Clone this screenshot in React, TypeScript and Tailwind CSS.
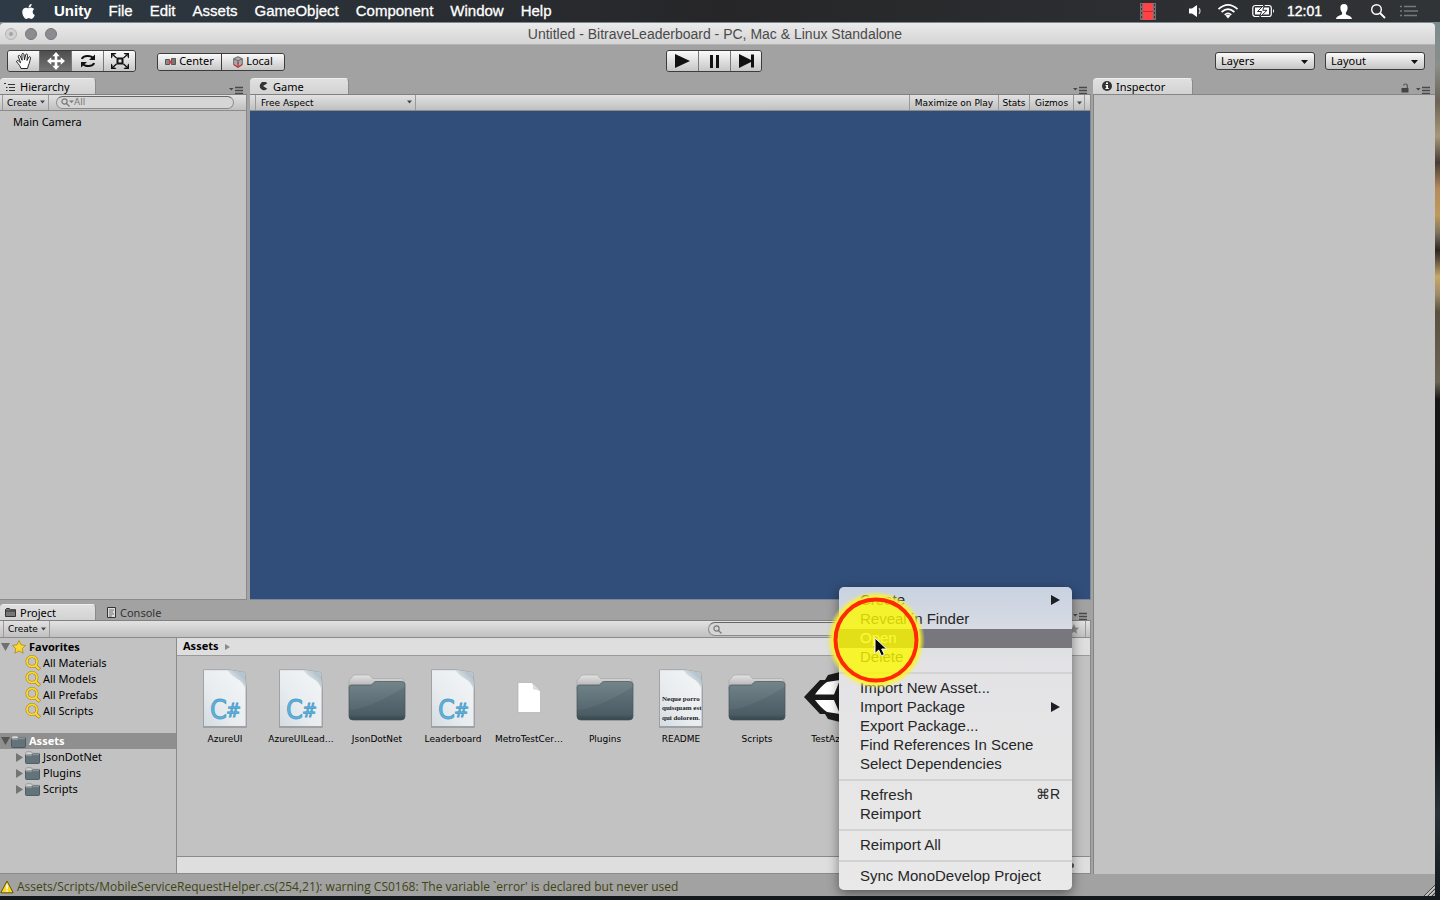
import React from "react";
import { FaApple } from "react-icons/fa";

const UI = "font-['Noto_Sans','Open_Sans',sans-serif]";
const SYSTEM = "font-['Liberation_Sans',Arial,sans-serif]";
const SMALL = "font-['DejaVu_Sans','Noto_Sans',sans-serif] text-[9px]";

/* ---------- shared pieces ---------- */

function Caret({ className = "" }: { className?: string }) {
  return (
    <svg className={className} width="5" height="4" viewBox="0 0 5 4" aria-hidden="true">
      <path d="M0 0.5h5L2.5 3.5z" fill="currentColor" />
    </svg>
  );
}

function PanelMenu({ label }: { label: string }) {
  return (
    <button aria-label={label} className="flex h-3 items-end text-[#484848]">
      <svg width="14" height="8" viewBox="0 0 14 8" aria-hidden="true">
        <path d="M0 2h4.6L2.3 4.600z" fill="currentColor" />
        <path d="M6 1.500h8M6 4.500h8M6 7.500h8" stroke="currentColor" strokeWidth="1.300" />
      </svg>
    </button>
  );
}

function Tab({ icon, children, active = false }: { icon: React.ReactNode; children: React.ReactNode; active?: boolean }) {
  const look = active
    ? "rounded-t border-r border-t border-r-[#8a8a8a] border-t-[#eeeeee] bg-linear-to-b from-[#e0e0e0] to-[#d2d2d2] text-black"
    : "border-t border-transparent text-[#333333]";
  return (
    <button role="tab" aria-selected={active} className={`flex h-4 items-center pt-px ${look}`}>
      {icon}
      <span>{children}</span>
    </button>
  );
}

const STRIP = "flex h-[17px] shrink-0 items-stretch border-y border-t-[#808080] border-b-[#8c8c8c] bg-linear-to-b from-[#e2e2e2] to-[#c0c0c0]";

/* ---------- macOS menu bar ---------- */

function MenuBar() {
  const menus = ["File", "Edit", "Assets", "GameObject", "Component", "Window", "Help"];
  return (
    <header className={`flex h-[22px] shrink-0 items-center bg-linear-to-r from-[#2e3a45] via-[#262628] to-[#303437] text-[15px] leading-[22px] text-white ${SYSTEM}`}>
      <nav className="flex items-center gap-[17px] pl-5">
        <a href="#apple" aria-label="Apple menu" className="flex w-[17px]">
          <FaApple size={17} />
        </a>
        <a href="#unity" className="font-bold">Unity</a>
        {menus.map((m) => (
          <a key={m} href={`#${m}`} className="[-webkit-text-stroke:0.3px_white]">{m}</a>
        ))}
      </nav>
      <div className="ml-auto flex items-center pr-[22px]">
        <svg width="16" height="17" viewBox="0 0 16 17" aria-hidden="true">
          <path d="M0 0h16v17H0z" fill="#707174" />
          <path d="M3 0h10v17H3z" fill="#ff4245" />
          <path d="M3 8.500h10" stroke="#c02c30" />
          <path d="M1.500 1v16M14.500 1v16" stroke="#333539" strokeDasharray="2 2" />
        </svg>
        <svg className="ml-8" width="14" height="14" viewBox="0 0 14 14" aria-hidden="true">
          <path d="M1 4.500h3L9 1v12L4 9.500H1z" fill="#fff" />
          <path d="M11 4.200q2 2.800 0 5.600" fill="none" stroke="#bbb" strokeWidth="1.300" />
        </svg>
        <svg className="ml-[15px]" width="22" height="16" viewBox="0 0 22 16" fill="none" stroke="#fff" strokeWidth="1.700" aria-hidden="true">
          <path d="M1.500 6.200Q11-2.400 20.500 6.200M4.600 9Q11 3.200 17.400 9M7.700 11.800Q11 9 14.300 11.800" />
          <path d="M8.500 12.600Q11 10.800 13.500 12.600L11 15.500z" fill="#fff" stroke="none" />
        </svg>
        <svg className="ml-[13px]" width="24" height="14" viewBox="0 0 24 14" aria-hidden="true">
          <rect x="0.800" y="1.500" width="18.500" height="11" rx="2.500" fill="none" stroke="#fff" strokeWidth="1.200" />
          <path d="M21 5q2 2 0 4z" fill="#fff" />
          <path d="M3 3.500h14v7H3z" fill="#fff" />
          <path d="M12.500 0.500L5.500 7.500H9.500L7.500 13.500L15 6.300H10.800z" fill="#fff" stroke="#2b2d30" strokeWidth="1" />
        </svg>
        <time className="ml-[11px] text-[14px] [-webkit-text-stroke:0.4px_white]">12:01</time>
        <svg className="ml-[13px]" width="18" height="15" viewBox="0 0 18 15" aria-hidden="true">
          <path d="M9 0C6.500 0 5.300 1.600 5.400 4c.1 2 .7 3.400 1.700 4.400v1.800C6.500 11.300 1.500 11.400 1 15h16c-.5-3.600-5.500-3.700-6.100-4.800V8.400c1-1 1.600-2.400 1.700-4.400C12.700 1.600 11.500 0 9 0z" fill="#fff" />
        </svg>
        <svg className="ml-[17px]" width="16" height="16" viewBox="0 0 16 16" fill="none" stroke="#fff" aria-hidden="true">
          <circle cx="6.500" cy="6.500" r="4.800" strokeWidth="1.400" />
          <path d="M10 10l5 5" strokeWidth="1.800" />
        </svg>
        <svg className="ml-[14px]" width="18" height="12" viewBox="0 0 18 12" stroke="#77797c" strokeWidth="1.500" aria-hidden="true">
          <path d="M0 1.500h2M4 1.500h12M0 6h2M4 6h14M0 10.500h2M4 10.500h13" />
        </svg>
      </div>
    </header>
  );
}

/* ---------- window chrome ---------- */

function TitleBar() {
  return (
    <div className="flex h-[22px] shrink-0 items-center rounded-t border-b border-[#b4b4b4] bg-linear-to-b from-[#ebebeb] to-[#d4d4d4]">
      <div className="flex gap-2 pl-[5px]">
        <button aria-label="Close" className="flex size-3 items-center justify-center rounded-full border border-[#b4b4b4] bg-[#d2d2d2]">
          <span className="size-1 rounded-full bg-[#a4a4a4]" />
        </button>
        <button aria-label="Minimize" className="size-3 rounded-full border border-[#77777b] bg-[#8b8b90]" />
        <button aria-label="Zoom" className="size-3 rounded-full border border-[#77777b] bg-[#8b8b90]" />
      </div>
      <h1 className={`mr-[62px] flex-1 text-center text-[14px] leading-5 text-[#4a4a4a] ${SYSTEM}`}>
        Untitled - BitraveLeaderboard - PC, Mac &amp; Linux Standalone
      </h1>
    </div>
  );
}

const FRAME = "flex overflow-hidden rounded-[3px] border border-[#3c3c3c]";
const LIGHT = "bg-linear-to-b from-[#fafafa] to-[#c6c6c6]";

function Toolbar() {
  return (
    <div className="grid h-[33px] shrink-0 grid-cols-[1fr_auto_1fr] items-center bg-[#a2a2a2] pb-px pl-[7px] pr-[10px] text-[11px]">
      <div className="flex items-center gap-[21px]">
        <div className={`${FRAME} h-[22px] divide-x divide-[#777777]`}>
          <button aria-label="Hand tool" className={`flex w-8 items-center justify-center ${LIGHT}`}>
            <svg width="18" height="18" viewBox="0 0 18 18" fill="#fff" stroke="#222" strokeWidth="1" strokeLinejoin="round" aria-hidden="true">
              <path d="M6 16.500C5.500 14.500 4 12.500 1.600 9.800 1.200 8.600 2.600 8 3.600 9l2 1.800L3.300 4.600C3 3.200 4.600 2.700 5.200 4l1.900 4.300L6.900 2.500C6.900 1 8.700 1 8.900 2.400l.6 5.500 1.100-5c.4-1.400 2-1.100 1.900.4l-.5 5.200 1.700-3.200c.7-1.200 2.200-.5 1.800.8-.8 3-1 5-2 7l-1 3.400z" />
            </svg>
          </button>
          <button aria-label="Move tool" aria-pressed="true" className="flex w-8 items-center justify-center bg-linear-to-b from-[#4e4e4e] to-[#747474]">
            <svg width="18" height="18" viewBox="0 0 18 18" fill="#fff" aria-hidden="true">
              <path d="M9 0l3.700 4.300H10.300V7.700H13.700V5.300L18 9l-4.300 3.700V10.300H10.300V13.700H12.700L9 18 5.300 13.700H7.700V10.300H4.300V12.700L0 9l4.300-3.700V7.700H7.700V4.300H5.300z" />
            </svg>
          </button>
          <button aria-label="Rotate tool" className={`flex w-8 items-center justify-center ${LIGHT}`}>
            <svg width="16" height="14" viewBox="0 0 16 14" fill="none" stroke="#111" strokeWidth="2.200" aria-hidden="true">
              <path d="M2 5Q3 2 7.500 2T12.500 4M14 9Q13 12 8.500 12T3.500 10" />
              <path d="M15 .5V6H9zM1 13.500V8h6z" fill="#111" stroke="none" />
            </svg>
          </button>
          <button aria-label="Scale tool" className={`flex w-[31px] items-center justify-center ${LIGHT}`}>
            <svg width="18" height="16" viewBox="0 0 18 16" fill="none" stroke="#111" aria-hidden="true">
              <rect x="6.500" y="5.500" width="5" height="5" strokeWidth="2" />
              <path d="M1 1l4.500 4M17 1l-4.500 4M1 15l4.500-4M17 15l-4.500-4" strokeWidth="1.300" />
              <path d="M0 0h5.500L4 1.500H1.500V4L0 5.500zM18 0h-5.500L14 1.500h2.500V4L18 5.500zM0 16h5.500L4 14.500H1.500V12L0 10.500zM18 16h-5.500l1.500-1.500h2.500V12l1.500-1.500z" fill="#111" stroke="none" />
            </svg>
          </button>
        </div>
        <div className={`${FRAME} mt-px h-[18px] divide-x divide-[#3c3c3c]`}>
          <button className={`flex w-16 items-center justify-center gap-[3px] ${LIGHT}`}>
            <svg width="11" height="8" viewBox="0 0 11 8" aria-hidden="true">
              <path d="M.5 1.500h4v5h-4z" fill="#8a8a8a" stroke="#555" />
              <path d="M6.500.5h4v6h-4z" fill="#777" stroke="#555" />
              <path d="M4 2.500h3v3H4z" fill="#d8343c" />
            </svg>
            Center
          </button>
          <button className={`flex w-[62px] items-center justify-center gap-[3px] ${LIGHT}`}>
            <svg width="10" height="12" viewBox="0 0 10 12" strokeLinejoin="round" aria-hidden="true">
              <path d="M5 .7l4.300 2v5.800L5 11.200.7 8.500V2.700z" fill="#aaa" stroke="#666" />
              <path d="M.7 2.700L5 5l4.300-2.300M5 5v3" fill="none" stroke="#666" />
              <path d="M.7 8.500L5 11.200l4.300-2.700M5 10V6" fill="none" stroke="#c8393e" strokeWidth="1.300" />
            </svg>
            Local
          </button>
        </div>
      </div>
      <div className={`${FRAME} mr-1 h-[22px] divide-x divide-[#777777]`}>
        <button aria-label="Play" className={`flex w-8 items-center justify-center ${LIGHT}`}>
          <svg width="15" height="14" viewBox="0 0 15 14" aria-hidden="true"><path d="M0 0l15 7-15 7z" fill="#111" /></svg>
        </button>
        <button aria-label="Pause" className={`flex w-8 items-center justify-center ${LIGHT}`}>
          <svg width="9" height="13" viewBox="0 0 9 13" aria-hidden="true"><path d="M0 0h3v13H0zM6 0h3v13H6z" fill="#111" /></svg>
        </button>
        <button aria-label="Step" className={`flex w-[30px] items-center justify-center ${LIGHT}`}>
          <svg width="15" height="14" viewBox="0 0 15 14" aria-hidden="true"><path d="M0 0l12 6V.5h3v13h-3V8L0 14z" fill="#111" /></svg>
        </button>
      </div>
      <div className="flex justify-end gap-[10px]">
        {["Layers", "Layout"].map((name) => (
          <div key={name} className={`relative h-[18px] w-[100px] ${FRAME} ${LIGHT}`}>
            <select aria-label={name} className="w-full appearance-none bg-transparent pl-[5px] text-[11px] leading-4">
              <option>{name}</option>
            </select>
            <svg className="pointer-events-none absolute right-[6px] top-[7px]" width="7" height="4" viewBox="0 0 7 4" aria-hidden="true">
              <path d="M0 0h7L3.500 4z" fill="#111" />
            </svg>
          </div>
        ))}
      </div>
    </div>
  );
}

/* ---------- panels ---------- */

function CreateButton() {
  return (
    <button className={`flex w-[45px] items-center pl-[4px] pt-[2px] ${SMALL}`}>
      Create <Caret className="mb-[3px] ml-[3px] text-[#444]" />
    </button>
  );
}

function SearchIcon({ menu = false }: { menu?: boolean }) {
  return (
    <svg className="shrink-0" width="13" height="9" viewBox="0 0 13 9" fill="none" stroke="#777" aria-hidden="true">
      <circle cx="3.500" cy="3.500" r="2.600" strokeWidth="1.200" />
      <path d="M5.500 5.500l3 3" strokeWidth="1.300" />
      {menu && <path d="M8 2.500h5L10.500 5z" fill="#777" stroke="none" />}
    </svg>
  );
}

const SEARCH_BOX = "my-px flex items-center rounded-full border border-[#8a8a8a] border-t-[#666] bg-[#d6d6d6] pl-1";

function Hierarchy() {
  return (
    <section aria-label="Hierarchy" className="flex w-[247px] shrink-0 flex-col">
      <div className="flex h-4 items-end">
        <div className="w-[96px] [&>button]:w-full">
          <Tab active icon={
            <svg className="ml-1 mr-[5px] shrink-0" width="11" height="9" viewBox="0 0 11 9" stroke="#333" aria-hidden="true">
              <path d="M0 .5h2M4 1.500h7M2 4.500h1.500M5 4.500h6M2 7.500h1.500M5 7.500h6" />
            </svg>
          }>Hierarchy</Tab>
        </div>
        <div className="ml-auto pr-1"><PanelMenu label="Hierarchy menu" /></div>
      </div>
      <div className={`${STRIP} border-r border-r-[#8a8a8a]`}>
        <div className="ml-[2px] flex border-x border-[#9a9a9a]"><CreateButton /></div>
        <label className={`${SEARCH_BOX} ml-[7px] w-[178px]`}>
          <SearchIcon menu />
          <input aria-label="Search hierarchy" placeholder="All" className={`w-full bg-transparent outline-none placeholder:text-[#777] ${SMALL}`} />
        </label>
      </div>
      <div className="flex-1 border-b border-r border-[#8a8a8a] bg-[#c2c2c2] pt-[3px]">
        <button className="h-4 pl-[13px] leading-4">Main Camera</button>
      </div>
    </section>
  );
}

function GameView() {
  return (
    <main className="flex min-w-0 flex-1 flex-col">
      <div className="flex h-4 items-end">
        <div className="w-[99px] [&>button]:w-full">
          <Tab active icon={
            <svg className="mb-[2px] ml-[9px] mr-[5px] shrink-0" width="9" height="9" viewBox="0 0 9 9" aria-hidden="true">
              <path d="M8.300 1.200A4.300 4.300 0 1 0 8.300 6.800L4 4z" fill="#333" />
            </svg>
          }>Game</Tab>
        </div>
        <div className="ml-auto pr-1"><PanelMenu label="Game menu" /></div>
      </div>
      <div className={`${STRIP} border-r border-r-[#8a8a8a] ${SMALL}`}>
        <div className="relative ml-[5px] flex w-[161px] border-x border-[#999]">
          <select aria-label="Aspect ratio" className="w-full appearance-none bg-transparent pl-[5px] pt-[2px]">
            <option>Free Aspect</option>
          </select>
          <Caret className="pointer-events-none absolute right-[3px] top-[5px] text-[#444]" />
        </div>
        <div className="ml-auto mr-[5px] flex divide-x divide-[#999] border-x border-[#999]">
          <button className="w-[89px] pt-[2px]">Maximize on Play</button>
          <button className="w-[31px] pt-[2px]">Stats</button>
          <button className="w-[44px] pt-[2px]">Gizmos</button>
          <button aria-label="Gizmo options" className="flex w-[10px] items-center justify-center text-[#444]"><Caret /></button>
        </div>
      </div>
      <div className="flex-1 border-b border-r border-[#7d8797] bg-[#314d79]" />
    </main>
  );
}

function Inspector() {
  return (
    <aside aria-label="Inspector" className="flex w-[342px] shrink-0 flex-col">
      <div className="flex h-4 items-end">
        <div className="w-[100px] [&>button]:w-full">
          <Tab active icon={
            <svg className="mb-[2px] ml-[9px] mr-1 shrink-0" width="10" height="10" viewBox="0 0 10 10" aria-hidden="true">
              <circle cx="5" cy="5" r="5" fill="#333" />
              <path d="M4 1.500h2v1.500H4zM3.500 4H6v3h.8v1H3.400V7h.8V5h-.7z" fill="#fff" />
            </svg>
          }>Inspector</Tab>
        </div>
        <div className="ml-auto flex items-end gap-[7px] pr-[5px]">
          <button aria-label="Lock inspector" className="mb-px">
            <svg width="8" height="10" viewBox="0 0 8 10" aria-hidden="true">
              <path d="M.5 5h7v4.500h-7z" fill="#444" />
              <path d="M6.300 5V2.500Q6.200 1 4.500 1T2.500 2.500" fill="none" stroke="#555" strokeWidth="1.200" />
            </svg>
          </button>
          <PanelMenu label="Inspector menu" />
        </div>
      </div>
      <div className="flex-1 border-l border-t border-[#858585] bg-[#c2c2c2]" />
    </aside>
  );
}

/* ---------- project browser ---------- */

function FolderSmall() {
  return (
    <svg width="15" height="13" viewBox="0 0 15 13" aria-hidden="true">
      <path d="M.5 2.500L1.500.8h4.800l1 1.500h7.200v3H.5z" fill="#d5d5d5" stroke="#777" strokeWidth=".6" />
      <path d="M.5 4h6l1-1h7v8.600q0 .9-.9.900H1.400q-.9 0-.9-.9z" fill="#63737a" stroke="#445157" strokeWidth=".8" />
      <path d="M1 4.600h5.800l1-1H14" stroke="#9aa8ad" strokeWidth=".8" fill="none" />
    </svg>
  );
}

function FavoriteSearch() {
  return (
    <svg width="16" height="16" viewBox="0 0 16 16" fill="none" aria-hidden="true">
      <circle cx="7" cy="6.500" r="5" stroke="#a98410" strokeWidth="3" />
      <path d="M10.500 10.500l4.300 4" stroke="#a98410" strokeWidth="3.600" />
      <circle cx="7" cy="6.500" r="5" stroke="#fbd935" strokeWidth="1.800" />
      <path d="M10.500 10.500l3.900 3.700" stroke="#fbd935" strokeWidth="2.200" />
    </svg>
  );
}

function Tree() {
  return (
    <nav aria-label="Project folders" className="w-[177px] shrink-0 border-r border-[#8a8a8a] bg-[#c2c2c2] pt-px">
      <button className="flex h-4 w-full items-center font-bold">
        <svg className="ml-px mr-[2px]" width="9" height="8" viewBox="0 0 9 8" aria-hidden="true"><path d="M0 0h9L4.500 8z" fill="#707070" /></svg>
        <svg className="mr-[3px]" width="14" height="14" viewBox="0 0 14 14" aria-hidden="true">
          <path d="M7 .6l2 4.200 4.600.6-3.400 3.200.9 4.600L7 10.900l-4.100 2.300.9-4.600L.4 5.400 5 4.800z" fill="#fcd92e" stroke="#a8861c" strokeWidth=".8" />
        </svg>
        Favorites
      </button>
      {["All Materials", "All Models", "All Prefabs", "All Scripts"].map((t) => (
        <button key={t} className="flex h-4 w-full items-center gap-[2px] pl-[25px]">
          <FavoriteSearch />
          {t}
        </button>
      ))}
      <button className="mt-[14px] flex h-4 w-full items-center bg-[#8f8f8f] font-bold text-white">
        <svg className="ml-px mr-px" width="9" height="8" viewBox="0 0 9 8" aria-hidden="true"><path d="M0 0h9L4.500 8z" fill="#555" /></svg>
        <FolderSmall />
        <span className="ml-[3px]">Assets</span>
      </button>
      {["JsonDotNet", "Plugins", "Scripts"].map((t) => (
        <button key={t} className="flex h-4 w-full items-center pl-4">
          <svg className="mr-[2px]" width="7" height="9" viewBox="0 0 7 9" aria-hidden="true"><path d="M0 0v9l7-4.500z" fill="#747474" /></svg>
          <FolderSmall />
          <span className="ml-[3px]">{t}</span>
        </button>
      ))}
    </nav>
  );
}

function Sheet({ children }: { children: React.ReactNode }) {
  return (
    <svg width="46" height="60" viewBox="0 0 46 60" aria-hidden="true">
      <defs>
        <linearGradient id="paper" x1="1" y1="0" x2="0" y2="1">
          <stop offset="0" stopColor="#f4f6f7" />
          <stop offset="0.600" stopColor="#e8ecef" />
          <stop offset="1" stopColor="#d3dce2" />
        </linearGradient>
        <linearGradient id="curl" x1="0.250" y1="0.750" x2="1" y2="0">
          <stop offset="0" stopColor="#eef2f4" />
          <stop offset="0.700" stopColor="#b3c2cc" />
          <stop offset="1" stopColor="#c3ced5" />
        </linearGradient>
      </defs>
      <path d="M1 2H25q12 1 18 4 1.500 8 1.700 16V59H1z" fill="#777" opacity=".45" />
      <path d="M1.500.7H25Q36 2 42.800 3.500q1.200 8 1.200 18V57.500H1.500z" fill="url(#paper)" stroke="#8f9396" strokeWidth=".7" />
      <path d="M25 1Q36 2.200 42.500 3.800q1.200 7 1.300 17-3-8-8-10.500Q29 6.500 25 1z" fill="url(#curl)" />
      {children}
    </svg>
  );
}

function CSharpIcon() {
  return (
    <Sheet>
      <text y="50" fontFamily="'DejaVu Sans Condensed'" fill="#62b3de" stroke="#4a9cc8" strokeWidth=".8">
        <tspan x="8" fontSize="27">C</tspan>
        <tspan x="24" y="48" fontSize="20">#</tspan>
      </text>
    </Sheet>
  );
}

function TextIcon() {
  return (
    <Sheet>
      <g fill="#222" fontFamily="Liberation Serif" fontWeight="700" fontSize="7">
        <text x="4" y="32">Neque porro</text>
        <text x="4" y="41">quisquam est</text>
        <text x="4" y="51">qui dolorem.</text>
      </g>
    </Sheet>
  );
}

function FolderIcon() {
  return (
    <svg width="60" height="60" viewBox="0 0 60 60" aria-hidden="true">
      <defs>
        <linearGradient id="folder" x1="0" y1="0" x2="0" y2="1">
          <stop offset="0" stopColor="#74848b" />
          <stop offset="0.850" stopColor="#52636b" />
          <stop offset="1" stopColor="#3a484f" />
        </linearGradient>
        <linearGradient id="flap" x1="0" y1="0" x2="0" y2="1">
          <stop offset="0" stopColor="#e2e2e2" />
          <stop offset="1" stopColor="#a5a5a5" />
        </linearGradient>
      </defs>
      <path d="M2 19v-7q0-1.500 1.500-2L5.500 7.500Q6.200 6 8 6h13q1.800 0 2.700 1.400L25.500 9.500h29q2.500 0 2.500 2.500v9H2z" fill="url(#flap)" stroke="#999" strokeWidth=".5" />
      <path d="M2 18q0-2 2.500-2H23q2 0 3-1.500l.5-.7q1-1.300 3-1.300h25q3 0 3.500 2.500v32.500q0 3.500-4 3.500H6q-4 0-4-3.500z" fill="url(#folder)" stroke="#46545a" strokeWidth=".7" />
      <path d="M57.500 18v29q0 3.500-4 3.500H6q-4 0-4-3.500V41Q22 40 57.500 18z" fill="#24343b" opacity=".13" />
    </svg>
  );
}

function BlankIcon() {
  return (
    <svg width="24" height="60" viewBox="0 0 24 60" aria-hidden="true">
      <path d="M1 13.500h14L23.500 22v21.500H1z" fill="#fff" stroke="#aaa" strokeWidth=".6" />
      <path d="M15 13.500q2 2 1.500 6.500 3-.5 7 2z" fill="#dedede" stroke="#bbb" strokeWidth=".4" />
    </svg>
  );
}

function SceneIcon() {
  return (
    <svg width="60" height="60" viewBox="0 0 60 60" aria-hidden="true">
      <path d="M1 28L17 11 22 11 25 6 37 3 56 7 51 28 56 49 37 53 25 50 22 45 17 45z" fill="#1b1b1b" />
      <path d="M12 25.500Q18 17 24 13L37 11 31 25.500zM12 31Q18 39 24 43L37 45 31 31z" fill="#fff" />
      <path d="M48 13l5 15-5 15-9-15z" fill="#fff" />
    </svg>
  );
}

function Project() {
  const assets: [string, React.ReactNode][] = [
    ["AzureUI", <CSharpIcon />],
    ["AzureUILead…", <CSharpIcon />],
    ["JsonDotNet", <FolderIcon />],
    ["Leaderboard", <CSharpIcon />],
    ["MetroTestCer…", <BlankIcon />],
    ["Plugins", <FolderIcon />],
    ["README", <TextIcon />],
    ["Scripts", <FolderIcon />],
    ["TestAzure", <SceneIcon />],
  ];
  return (
    <section aria-label="Project" className="flex h-[270px] shrink-0 flex-col">
      <div className="flex h-4 items-end">
        <div className="w-[96px] [&>button]:w-full">
          <Tab active icon={
            <svg className="mb-[2px] ml-[5px] mr-1 shrink-0" width="11" height="9" viewBox="0 0 11 9" aria-hidden="true">
              <path d="M.5 8.500v-7L1.500.5h3l1 1.200h5v6.800z" fill="#777" stroke="#333" />
              <path d="M1 3h9" stroke="#333" />
            </svg>
          }>Project</Tab>
        </div>
        <div className="ml-[11px]">
          <Tab icon={
            <svg className="mb-[2px] mr-[4px] shrink-0" width="9" height="11" viewBox="0 0 9 11" aria-hidden="true">
              <path d="M.5.5h8v10h-8z" fill="#ddd" stroke="#333" />
              <path d="M2 3h5M2 5h4M2 7h5M2 9h3" stroke="#555" strokeWidth=".8" />
            </svg>
          }>Console</Tab>
        </div>
        <div className="ml-auto pr-1"><PanelMenu label="Project menu" /></div>
      </div>
      <div className={`${STRIP} h-[18px] border-r border-r-[#8a8a8a]`}>
        <div className="ml-[3px] flex border-x border-[#9a9a9a]"><CreateButton /></div>
        <label className={`${SEARCH_BOX} ml-auto w-[250px]`}>
          <SearchIcon />
          <input aria-label="Search project" className={`w-full bg-transparent outline-none ${SMALL}`} />
        </label>
        <button aria-label="Save search" className="mx-1 flex items-center justify-center border-r border-[#999] pl-[107px] pr-[6px]">
          <svg width="10" height="10" viewBox="0 0 14 14" aria-hidden="true">
            <path d="M7 0l2 4.800 5 .6-3.600 3.200 1 5L7 10.900l-4.400 2.700 1-5L0 5.400l5-.6z" fill="#8a8a8a" />
          </svg>
        </button>
      </div>
      <div className="flex min-h-0 flex-1 border-b border-r border-[#8a8a8a]">
        <Tree />
        <div className="flex min-w-0 flex-1 flex-col bg-[#c2c2c2]">
          <div className="flex h-[18px] shrink-0 items-center border-b border-[#9a9a9a] bg-[#dedede] pl-[6px] font-bold">
            Assets
            <svg className="ml-[6px]" width="5" height="6" viewBox="0 0 5 6" aria-hidden="true"><path d="M0 0v6l5-3z" fill="#8a8a8a" /></svg>
          </div>
          <div className="flex min-h-0 flex-1 flex-wrap content-start overflow-hidden pl-[10px] pt-[13px]">
            {assets.map(([name, icon]) => (
              <button key={name} className="flex w-[76px] flex-col items-center">
                {icon}
                <span className={`mt-1 whitespace-nowrap leading-3 ${SMALL}`}>{name}</span>
              </button>
            ))}
          </div>
          <div className="flex h-[17px] shrink-0 items-center justify-end border-t border-[#8a8a8a] bg-[#dedede] pr-4">
            <input type="range" aria-label="Icon size" defaultValue={100} className="h-[3px] w-14 appearance-none rounded-full bg-[#999] [&::-webkit-slider-thumb]:size-[5px] [&::-webkit-slider-thumb]:appearance-none [&::-webkit-slider-thumb]:rounded-full [&::-webkit-slider-thumb]:bg-[#555]" />
          </div>
        </div>
      </div>
    </section>
  );
}

/* ---------- context menu ---------- */

type Entry = { label: string; submenu?: boolean; shortcut?: string; active?: boolean };

const GROUPS: Entry[][] = [
  [{ label: "Create", submenu: true }, { label: "Reveal in Finder" }, { label: "Open", active: true }, { label: "Delete" }],
  [
    { label: "Import New Asset..." },
    { label: "Import Package", submenu: true },
    { label: "Export Package..." },
    { label: "Find References In Scene" },
    { label: "Select Dependencies" },
  ],
  [{ label: "Refresh", shortcut: "⌘R" }, { label: "Reimport" }],
  [{ label: "Reimport All" }],
  [{ label: "Sync MonoDevelop Project" }],
];

function ContextMenu() {
  return (
    <div
      role="menu"
      className={`absolute left-[839px] top-[587px] w-[233px] rounded-[5px] bg-linear-to-b from-[#c9d2e0] from-0% via-[#e3e3e5] via-25% to-[#e9e9e9] py-1 text-[15px] leading-[17px] text-[#262626] shadow-[0_4px_12px_rgba(0,0,0,0.45)] ${SYSTEM}`}
    >
      {GROUPS.map((group, i) => (
        <React.Fragment key={i}>
          {i > 0 && (
            <div role="separator" className="flex h-3 items-center">
              <div className="h-[2px] w-full bg-[#d2d2d3]" />
            </div>
          )}
          {group.map((e) => (
            <button
              key={e.label}
              role="menuitem"
              className={`flex h-[19px] w-full items-center justify-between pb-[2px] pl-[21px] pr-3 ${e.active ? "bg-[#79777e] text-white" : ""}`}
            >
              {e.label}
              {e.submenu && (
                <svg width="9" height="10" viewBox="0 0 9 10" aria-hidden="true"><path d="M0 0v10l9-5z" fill="#1c1f24" /></svg>
              )}
              {e.shortcut && <span className="text-[14px]">{e.shortcut}</span>}
            </button>
          ))}
        </React.Fragment>
      ))}
    </div>
  );
}

function ClickHighlight() {
  return (
    <svg className="pointer-events-none absolute left-[826px] top-[590px]" width="100" height="100" viewBox="0 0 100 100" aria-hidden="true">
      <defs>
        <radialGradient id="glow">
          <stop offset="0.880" stopColor="#fbf335" stopOpacity="1" />
          <stop offset="1" stopColor="#fbf335" stopOpacity="0" />
        </radialGradient>
      </defs>
      <path d="M50 1a49 49 0 1 0 0 98 49 49 0 0 0 0-98zm0 9a40 40 0 1 1 0 80 40 40 0 0 1 0-80z" fill="url(#glow)" />
      <circle cx="50" cy="50" r="40" fill="#fdf900" fillOpacity=".8" />
      <circle cx="50" cy="50" r="40.500" fill="none" stroke="#ff2a05" strokeWidth="4" />
      <path d="M49 48v15.500l3.700-3.400 2.700 5.700 3-1.400-2.700-5.400h5z" fill="#050505" stroke="#fff" strokeWidth="1" />
    </svg>
  );
}

/* Desktop photo showing along the window's right edge. */
const DESKTOP =
  "bg-[linear-gradient(to_bottom,#7a8a90_0%,#8a8f88_5%,#6a6256_9%,#a89878_13%,#463c34_16%,#b58a5c_19%,#c09a5a_22%,#7d735f_24%,#2c2520_26%,#5a4a3c_27%,#c8a868_29%,#a08a68_31%,#5a5040_33%,#6a6455_41%,#161616_43%,#0c1012_80%,#2a3338_90%,#12181b_100%)]";

export default function App() {
  return (
    <div className={`relative flex min-h-screen flex-col overflow-hidden bg-[#12181b] text-[11px] text-black ${UI}`}>
      <MenuBar />
      <div className={`flex flex-1 flex-col pb-1 pr-[5px] pt-px ${DESKTOP}`}>
        <div className="flex flex-1 flex-col rounded-t bg-[#a2a2a2]">
          <TitleBar />
          <Toolbar />
          <div className="flex flex-1 gap-[2px]">
            <div className="flex min-w-0 flex-1 flex-col gap-1">
              <div className="flex flex-1 gap-[3px]">
                <Hierarchy />
                <GameView />
              </div>
              <Project />
            </div>
            <Inspector />
          </div>
          <footer className="flex h-[22px] shrink-0 items-center justify-between text-[#3f4412]">
            <p className="flex items-center gap-[3px] pt-1 font-['Open_Sans','Noto_Sans',sans-serif] text-[12px] leading-[18px]">
              <svg width="14" height="14" viewBox="0 0 14 14" aria-hidden="true">
                <path d="M7 1L13.200 12.800H.8z" fill="#fcd81e" stroke="#5d5316" strokeWidth="1" strokeLinejoin="round" />
                <path d="M6.300 4.500h1.500v4.700H6.300zM6.300 10.200h1.500v1.500H6.300z" fill="#fff" />
              </svg>
              Assets/Scripts/MobileServiceRequestHelper.cs(254,21): warning CS0168: The variable `error' is declared but never used
            </p>
            <svg className="self-end" width="12" height="12" viewBox="0 0 12 12" stroke="#444" aria-hidden="true">
              <path d="M1 12L12 1M5 12l7-7M9 12l3-3" />
              <path d="M2.500 12L12 2.500M6.500 12L12 6.500" stroke="#e0e0e0" />
            </svg>
          </footer>
        </div>
      </div>
      <ContextMenu />
      <ClickHighlight />
    </div>
  );
}
